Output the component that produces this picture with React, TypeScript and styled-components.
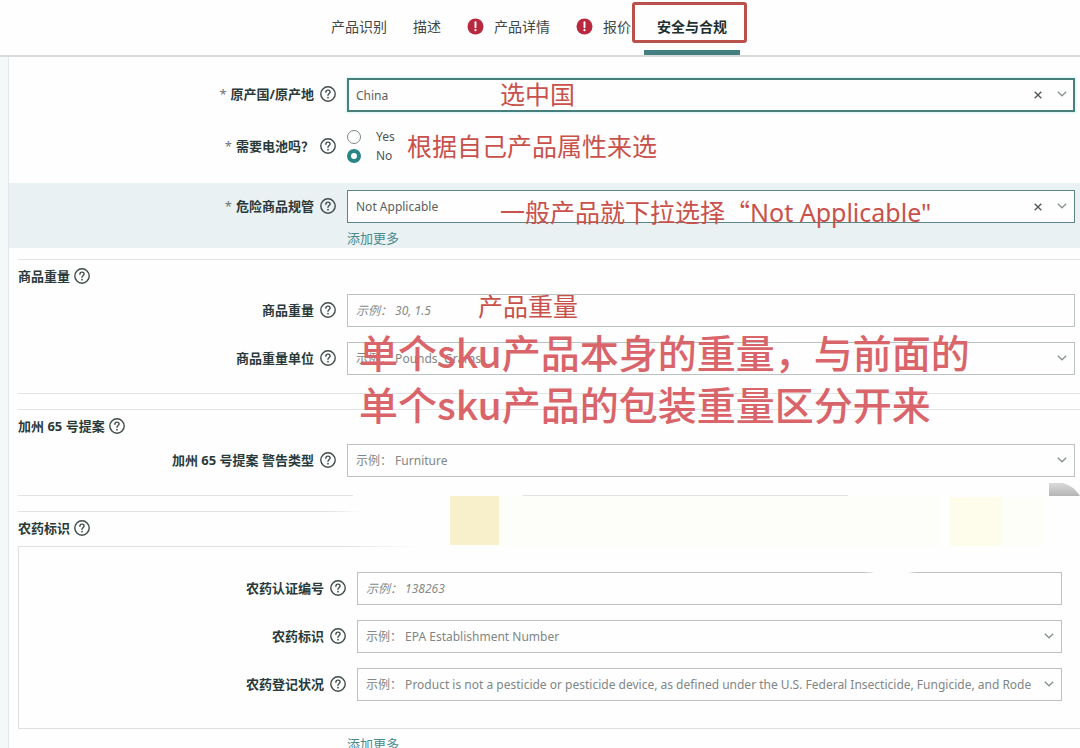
import React from 'react';
import styled, { createGlobalStyle, css } from 'styled-components';

const LATIN = '"Noto Sans", "Noto Sans CJK SC", sans-serif';
const HAN = '"Noto Sans CJK SC", "Noto Sans", sans-serif';

const GlobalStyle = createGlobalStyle`
  * { box-sizing: border-box; }
  body {
    margin: 0;
    background: #fefefe;
    color: #2c3a3a;
    font-family: ${LATIN};
    font-size: 12px;
    overflow-x: hidden;
  }
`;

const TabBar = styled.nav`
  display: flex;
  justify-content: center;
  height: 57px;
  padding-right: 22px;
  border-bottom: 2px solid #d9dbdb;
`;

const Tab = styled.button<{ $active?: boolean }>`
  position: relative;
  display: flex;
  align-items: center;
  gap: 10px;
  margin: 0;
  padding: 2px 13px 0;
  border: 0;
  border-bottom: 5px solid ${(p) => (p.$active ? '#437f80' : 'transparent')};
  background: none;
  color: ${(p) => (p.$active ? '#1f2f30' : '#3f4747')};
  font-family: ${HAN};
  font-size: 14px;
  font-weight: ${(p) => (p.$active ? 700 : 400)};
  line-height: 20px;
  white-space: nowrap;
`;

const TabFrame = styled.span`
  position: absolute;
  inset: 2px -7px 7px -12px;
  border: 3px solid #b9504b;
  border-radius: 3px;
`;

const Body = styled.main`
  margin-left: 8px;
  border-left: 1px solid #e3e9ea;
  box-shadow: -8px 0 0 #f3f8f9;
  padding-top: 21px;
`;

const Row = styled.div<{ $gap?: number; $band?: boolean; $inset?: boolean; $middle?: boolean }>`
  display: grid;
  grid-template-columns: 327px minmax(0, 1fr);
  column-gap: 11px;
  align-items: ${(p) => (p.$middle ? 'center' : 'start')};
  padding-right: 5px;
  margin-bottom: ${(p) => p.$gap ?? 0}px;
  ${(p) => p.$band && css`
    background: #e9f1f2;
    padding-top: 7px;
  `}
  ${(p) => p.$inset && css`
    padding-right: 18px;
  `}
`;

const LabelCell = styled.div`
  display: flex;
  align-items: center;
  justify-content: flex-end;
  gap: 6px;
  height: 32px;
`;

const Label = styled.label`
  color: #2a3a3b;
  font-size: 13px;
  font-weight: 700;
  line-height: 20px;
  white-space: nowrap;
`;

const Star = styled.span`
  margin-right: 4px;
  color: #6d7474;
  font-weight: 400;
`;

const Help = styled.button`
  display: flex;
  padding: 0;
  border: 0;
  background: none;
  color: #414b4b;
`;

const Field = styled.div`
  position: relative;
  min-width: 0;
`;

const control = css<{ $tone?: 'focus' | 'filled' }>`
  display: block;
  width: 100%;
  height: 33px;
  margin: 0;
  padding: 0 30px 0 8px;
  border: 1px solid #bcc1c1;
  border-radius: 0;
  background: #fefefe;
  color: #7f8686;
  font-family: ${LATIN};
  font-size: 12px;
  outline: none;
  ${(p) => p.$tone && css`
    border-color: #5d8585;
    color: #59605f;
  `}
  ${(p) => p.$tone === 'focus' && css`
    height: 34px;
    padding-left: 7px;
    border: 2px solid #477f7c;
    box-shadow: 0 0 2px 1px #d5f3f2;
  `}
`;

const Select = styled.select`
  ${control}
  appearance: none;
`;

const Input = styled.input`
  ${control}
  &::placeholder {
    color: #858b8b;
    font-style: italic;
    opacity: 1;
  }
`;

const Affix = styled.span`
  position: absolute;
  top: 0;
  right: 7px;
  display: flex;
  align-items: center;
  gap: 14px;
  height: 32px;
  color: #8b9292;
  pointer-events: none;
`;

const Clear = styled.button`
  display: flex;
  padding: 2px 0 0;
  border: 0;
  background: none;
  color: #4f5656;
  pointer-events: auto;
`;

const Link = styled.a`
  display: inline-block;
  margin-top: 5px;
  color: #4b8a90;
  font-size: 13px;
  line-height: 20px;
  text-decoration: none;
`;

const LinkRow = styled.div`
  padding: 0 0 8px 338px;
`;

const Radios = styled.div`
  display: flex;
  flex-direction: column;
`;

const RadioLabel = styled.label`
  display: flex;
  align-items: center;
  gap: 15px;
  height: 19px;
  color: #4c5454;
`;

const Radio = styled.input`
  appearance: none;
  width: 14px;
  height: 14px;
  margin: 0;
  border: 1px solid #7c8686;
  border-radius: 50%;
  background: #fff;
  &:checked { border: 4px solid #2b8585; }
`;

const Section = styled.section`
  position: relative;
  border-top: 1px solid #e0e4e4;
  margin: 0 0 15px 9px;
  padding-bottom: 18px;
  border-bottom: 1px solid #e0e4e4;
  & ${Row} { grid-template-columns: 318px minmax(0, 1fr); }
`;

const PlainSection = styled.section`
  position: relative;
  margin-left: 9px;
`;

const Heading = styled.h2`
  display: flex;
  align-items: center;
  gap: 4px;
  height: 34px;
  margin: 0;
  padding-bottom: 2px;
  color: #2a3a3b;
  font-size: 13px;
  font-weight: 700;
  line-height: 20px;
`;

const FadeRule = styled.div`
  height: 1px;
  background: linear-gradient(90deg, #e0e4e4 310px, transparent 345px);
`;

const Group = styled.div`
  position: relative;
  padding: 26px 0 27px;
  border: solid #dde1e1;
  border-width: 0 0 1px 1px;
  & ${Row} { grid-template-columns: 327px minmax(0, 1fr); }
  &::before {
    content: '';
    position: absolute;
    top: 0;
    left: 0;
    width: 400px;
    height: 1px;
    background: linear-gradient(90deg, #dde1e1 320px, transparent);
  }
`;

const Patch = styled.span<{ $x: number; $y: number; $w: number; $h: number; $fill: string }>`
  position: absolute;
  left: ${(p) => p.$x}px;
  top: ${(p) => p.$y}px;
  width: ${(p) => p.$w}px;
  height: ${(p) => p.$h}px;
  background: ${(p) => p.$fill};
  pointer-events: none;
`;

const Corner = styled.svg`
  position: absolute;
  right: 0;
  top: -28px;
`;

const Note = styled.span<{ $x: number; $y: number; $big?: boolean }>`
  position: absolute;
  z-index: 1;
  left: ${(p) => p.$x}px;
  top: ${(p) => p.$y}px;
  color: ${(p) => (p.$big ? '#d9646a' : '#c9514b')};
  font-family: ${(p) => (p.$big ? HAN : LATIN)};
  font-size: ${(p) => (p.$big ? 39 : 25)}px;
  font-weight: ${(p) => (p.$big ? 500 : 400)};
  line-height: ${(p) => (p.$big ? 52 : 32)}px;
  white-space: nowrap;
  pointer-events: none;
`;

const Quote = styled.span`
  font-family: ${HAN};
`;

const HelpIcon = () => (
  <Help type="button" aria-label="帮助">
    <svg width="16" height="16" viewBox="0 0 16 16" fill="none" stroke="currentColor" strokeWidth="1.4" strokeLinecap="round">
      <circle cx="8" cy="8" r="7.2" />
      <path d="M5.9 6.2C5.9 4.9 6.8 4.1 8 4.1s2.1.8 2.1 1.9c0 1.5-2.1 1.6-2.1 3.3" />
      <path d="M8 11.6v.1" strokeWidth="1.7" />
    </svg>
  </Help>
);

const AlertIcon = () => (
  <svg width="17" height="17" viewBox="0 0 17 17" aria-hidden="true">
    <circle cx="8.5" cy="8.5" r="8" fill="#b9283f" />
    <path d="M8.5 4.2v5" stroke="#fff" strokeWidth="1.9" strokeLinecap="round" />
    <circle cx="8.5" cy="12.2" r="1.1" fill="#fff" />
  </svg>
);

const Chevron = () => (
  <svg width="12" height="8" viewBox="0 0 12 8" fill="none" stroke="currentColor" strokeWidth="1.4" aria-hidden="true">
    <path d="M1.8 1.8 6 5.8l4.2-4" />
  </svg>
);

const ClearButton = () => (
  <Clear type="button" aria-label="清除">
    <svg width="8" height="8" viewBox="0 0 8 8" stroke="currentColor" strokeWidth="1.3">
      <path d="M.7.7l6.6 6.6M7.3.7.7 7.3" />
    </svg>
  </Clear>
);

type FieldRowProps = {
  id: string;
  label: string;
  text: string;
  kind?: 'select' | 'input';
  tone?: 'focus' | 'filled';
  required?: boolean;
  gap?: number;
  band?: boolean;
  inset?: boolean;
  children?: React.ReactNode;
};

const FieldRow = ({ id, label, text, kind = 'select', tone, required, gap, band, inset, children }: FieldRowProps) => (
  <Row $gap={gap} $band={band} $inset={inset}>
    <LabelCell>
      <Label htmlFor={id}>{required && <Star>*</Star>}{label}</Label>
      <HelpIcon />
    </LabelCell>
    <Field>
      {kind === 'input' ? (
        <Input id={id} placeholder={text} />
      ) : (
        <>
          <Select id={id} $tone={tone}><option>{text}</option></Select>
          <Affix>{tone && <ClearButton />}<Chevron /></Affix>
        </>
      )}
      {children}
    </Field>
  </Row>
);

export default function App() {
  return (
    <>
      <GlobalStyle />
      <TabBar>
        <Tab>产品识别</Tab>
        <Tab>描述</Tab>
        <Tab><AlertIcon />产品详情</Tab>
        <Tab><AlertIcon />报价</Tab>
        <Tab $active>安全与合规<TabFrame /></Tab>
      </TabBar>
      <Body>
        <FieldRow id="origin" label="原产国/原产地" text="China" tone="focus" required gap={15}>
          <Note $x={153} $y={0}>选中国</Note>
        </FieldRow>
        <Row $gap={18} $middle>
          <LabelCell>
            <Label as="span" id="battery"><Star>*</Star>需要电池吗？</Label>
            <HelpIcon />
          </LabelCell>
          <Field>
            <Radios role="radiogroup" aria-labelledby="battery">
              <RadioLabel><Radio type="radio" name="battery" />Yes</RadioLabel>
              <RadioLabel><Radio type="radio" name="battery" defaultChecked />No</RadioLabel>
            </Radios>
            <Note $x={60} $y={3}>根据自己产品属性来选</Note>
          </Field>
        </Row>
        <FieldRow id="hazard" label="危险商品规管" text="Not Applicable" tone="filled" required band gap={11}>
          <Link href="#more-hazard">添加更多</Link>
          <Note $x={153} $y={5}>一般产品就下拉选择<Quote>“</Quote>Not Applicable"</Note>
        </FieldRow>

        <Section>
          <Heading>商品重量<HelpIcon /></Heading>
          <FieldRow id="weight" label="商品重量" text="示例： 30, 1.5" kind="input" gap={15}>
            <Note $x={131} $y={-4}>产品重量</Note>
          </FieldRow>
          <FieldRow id="unit" label="商品重量单位" text="示例： Pounds, Grams">
            <Note $x={12} $y={-17} $big>
              单个sku产品本身的重量，与前面的<br />单个sku产品的包装重量区分开来
            </Note>
          </FieldRow>
        </Section>

        <Section>
          <Heading>加州 65 号提案<HelpIcon /></Heading>
          <FieldRow id="prop65" label="加州 65 号提案 警告类型" text="示例： Furniture" />
          <Patch $x={335} $y={84} $w={170} $h={3} $fill="#fefefe" />
          <Patch $x={830} $y={84} $w={232} $h={3} $fill="#fefefe" />
        </Section>

        <PlainSection>
          <FadeRule />
          <Heading>农药标识<HelpIcon /></Heading>
          <Patch $x={432} $y={-15} $w={49} $h={49} $fill="#f7f0cb" />
          <Patch $x={481} $y={-14} $w={440} $h={49} $fill="#fdfefa" />
          <Patch $x={932} $y={-14} $w={52} $h={49} $fill="#fefdeb" />
          <Patch $x={984} $y={-14} $w={42} $h={49} $fill="#fdfef7" />
          <Corner width="31" height="13" viewBox="0 0 31 13" aria-hidden="true">
            <defs>
              <linearGradient id="corner" x1="0" y1="0" x2="0" y2="1">
                <stop offset="0" stopColor="#dadada" />
                <stop offset="1" stopColor="#b5b5b5" />
              </linearGradient>
            </defs>
            <path d="M0 0H14Q25 3 31 13H0Z" fill="url(#corner)" />
          </Corner>
          <Group>
            <FieldRow id="cert" label="农药认证编号" text="示例： 138263" kind="input" inset gap={15}>
              <Patch $x={508} $y={0} $w={52} $h={1} $fill="linear-gradient(90deg, #bcc1c1, #fefefe 10px, #fefefe 42px, #bcc1c1)" />
            </FieldRow>
            <FieldRow id="marking" label="农药标识" text="示例： EPA Establishment Number" inset gap={15} />
            <FieldRow
              id="status"
              label="农药登记状况"
              text="示例： Product is not a pesticide or pesticide device, as defined under the U.S. Federal Insecticide, Fungicide, and Rodenticide Act"
              inset
            />
          </Group>
        </PlainSection>
        <LinkRow><Link href="#more-pesticide">添加更多</Link></LinkRow>
      </Body>
    </>
  );
}
